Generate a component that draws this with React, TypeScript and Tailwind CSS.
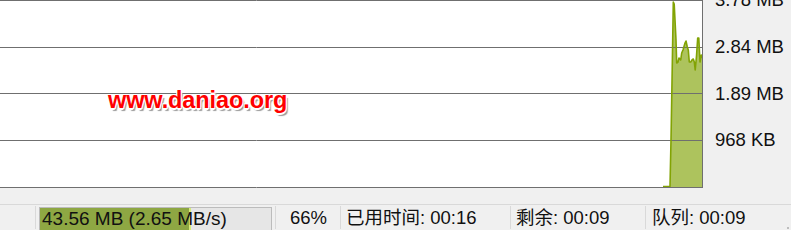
import React from "react";

// 速度曲线（绝对坐标，与图表框一致）
const PTS: [number, number][] = [
  [663, 186.5], [670, 186.5], [671, 140], [671.7, 100], [672.4, 58], [673.3, 2],
  [674.2, 4], [675, 20], [676, 40], [676.7, 63], [678, 62], [679, 58],
  [680.7, 60], [681.7, 53], [683, 50], [685, 43], [686, 41], [687.3, 47],
  [688.3, 50], [689.3, 62], [690.7, 62], [692, 60], [693.3, 59], [694.3, 62],
  [695.2, 70], [696.5, 56], [697.7, 38], [698.8, 38], [700, 62], [701.3, 55],
  [702, 58],
];

const LABELS = ["3.78 MB", "2.84 MB", "1.89 MB", "968 KB"];

function Chart() {
  const line = PTS.map(([x, y], i) => `${i ? "L" : "M"}${x} ${y}`).join(" ");
  const area = `${line} L702 187 L663 187 Z`;
  return (
    <div className="h-[188px] w-[703px] shrink-0 bg-white relative">
      <svg width="703" height="188" className="block">
        <path d={area} fill="#adc35d" />
        {[0.5, 47.5, 93.5, 140.5].map((y) => (
          <line key={y} x1="0" x2="702" y1={y} y2={y} stroke="#6f6f6f" strokeWidth="1" />
        ))}
        <path d={line} fill="none" stroke="#82a304" strokeWidth="1.6" strokeLinejoin="round" />
        <line x1="0" x2="703" y1="187.5" y2="187.5" stroke="#6f6f6f" />
        <line x1="702.5" x2="702.5" y1="0" y2="188" stroke="#6f6f6f" />
      </svg>
      <div className="absolute left-[108px] top-[87px] font-['Liberation_Sans',Arial,sans-serif] text-[23.5px] font-bold leading-[27px] tracking-[-0.1px] text-[#ff0000] [text-shadow:-1px_-1px_0_#fff,1px_-1px_0_#fff,-1px_1px_0_#fff,1px_1px_0_#fff,0_-1.5px_0_#fff,0_1.5px_0_#fff,2px_2.5px_1px_#9a9a9a]">
        www.daniao.org
      </div>
    </div>
  );
}

function StatusBar() {
  return (
    <div className="flex h-[25px] border-t border-[#d9d9d9] pt-[1px] text-[18.5px] leading-[24px] text-[#111]">
      <div className="w-[36px] shrink-0 border-r border-[#d9d9d9]" />
      <div className="flex w-[240px] shrink-0 border-r border-[#d9d9d9] pl-[3px] pt-[1px]">
        <div className="relative h-[30px] w-[233px] border border-[#bcbcbc] bg-[#e6e6e6]">
          <div className="absolute inset-y-0 left-0 w-[151px] border-r-2 border-[#d6ec7a] bg-[#8ea743]" />
          <span className="relative block pl-[2px] text-[19px] leading-[22px] whitespace-nowrap">43.56 MB (2.65 MB/s)</span>
        </div>
      </div>
      <div className="w-[65px] shrink-0 border-r border-[#d9d9d9] pr-[13px] text-right">66%</div>
      <div className="w-[170px] shrink-0 border-r border-[#d9d9d9] pl-[5px] whitespace-nowrap">已用时间: 00:16</div>
      <div className="w-[135px] shrink-0 border-r border-[#d9d9d9] pl-[5px] whitespace-nowrap">剩余: 00:09</div>
      <div className="relative flex-1 pl-[6px] whitespace-nowrap">
        队列: 00:09
        <svg width="8" height="8" className="absolute right-[1px] bottom-[-6px]">
          <rect x="5" y="0" width="2" height="2" fill="#bdbdbd" />
          <rect x="1" y="4" width="2" height="2" fill="#bdbdbd" />
          <rect x="5" y="4" width="2" height="2" fill="#bdbdbd" />
        </svg>
      </div>
    </div>
  );
}

export default function App() {
  return (
    <div className="flex h-[230px] w-[791px] flex-col overflow-hidden bg-[#f0f0f0] font-['Liberation_Sans','Noto_Sans_CJK_SC',sans-serif]">
      <div className="flex h-[188px] shrink-0">
        <Chart />
        <div className="-mt-[12px] flex flex-col pl-[12px] text-[18.5px] leading-[24px] text-[#111]">
          {LABELS.map((l) => (
            <div key={l} className="h-[46.75px] whitespace-nowrap">{l}</div>
          ))}
        </div>
      </div>
      <div className="h-[16px] shrink-0" />
      <StatusBar />
    </div>
  );
}
